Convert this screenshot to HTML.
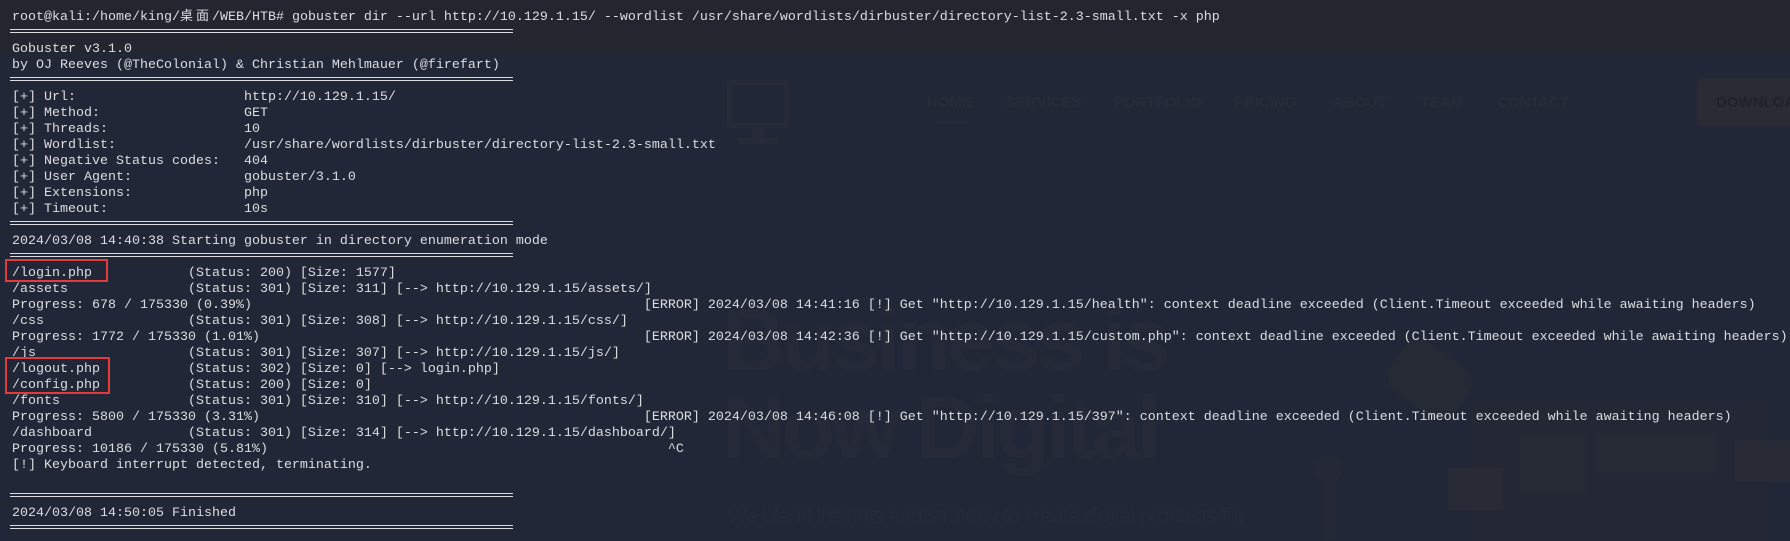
<!DOCTYPE html>
<html><head><meta charset="utf-8"><style>
html,body{margin:0;padding:0}
body{width:1790px;height:535px;overflow:hidden;background:#222738;position:relative;font-family:"Liberation Mono","DejaVu Sans Mono",monospace}
.top{position:absolute;left:0;top:0;width:1790px;height:53px;background:#24262f}
.bg{position:absolute;font-family:"Liberation Sans",sans-serif;font-weight:bold}
.nav{position:absolute;top:94px;font-size:15px;color:#282c38;font-family:"Liberation Sans",sans-serif;font-weight:bold}
pre{position:absolute;left:12px;top:7px;margin:0;font-size:13.33px;line-height:16px;color:#dcdde0;font-family:"Liberation Mono",monospace}
.cj{display:inline-block;width:32px;font-family:"Noto Sans CJK SC",sans-serif;font-size:13px;letter-spacing:3px}
.sep{position:absolute;left:10px;width:503px;height:2px;border-top:1px solid #dcdde0;border-bottom:1px solid #dcdde0}
.box{position:absolute;border:2px solid #e33b3b;box-sizing:border-box}
.r{position:absolute;background:#252935}
</style></head><body>
<div class="top"></div>
<div class="r" style="left:727px;top:80px;width:62px;height:48px;border:5px solid #272b37;background:transparent;box-sizing:border-box;border-radius:3px"></div>
<div class="r" style="left:752px;top:128px;width:12px;height:10px;background:#272b37"></div>
<div class="r" style="left:738px;top:138px;width:40px;height:6px;background:#272b37"></div>
<div class="nav" style="left:927px">HOME</div>
<div class="nav" style="left:1006px">SERVICES</div>
<div class="nav" style="left:1114px">PORTFOLIO</div>
<div class="nav" style="left:1234px">PRICING</div>
<div class="nav" style="left:1333px">ABOUT</div>
<div class="nav" style="left:1421px">TEAM</div>
<div class="nav" style="left:1497px">CONTACT</div>
<div class="r" style="left:937px;top:121px;width:30px;height:3px;background:#272a35"></div>
<div class="r" style="left:1697px;top:78px;width:100px;height:48px;background:#2a2c35;border-radius:5px"></div>
<div class="nav" style="left:1716px;top:94px;color:#1f222d">DOWNLOAD</div>
<div class="bg" style="left:722px;top:296px;font-size:88px;color:#262a38;letter-spacing:-4px;line-height:88px">Business is<br>Now Digital</div>
<div class="bg" style="left:727px;top:503px;font-size:22px;color:#262a38;font-weight:normal;letter-spacing:-1px">We blend insights and strategy to create digital products for</div>
<div class="r" style="left:1472px;top:401px;width:295px;height:140px;background:#242834"></div>
<div class="r" style="left:1520px;top:433px;width:66px;height:62px;background:#262a34"></div>
<div class="r" style="left:1595px;top:433px;width:122px;height:40px;background:#262a34"></div>
<div class="r" style="left:1448px;top:468px;width:55px;height:42px;background:#282b35"></div>
<div class="r" style="left:1734px;top:440px;width:56px;height:42px;background:#282b35"></div>
<div class="r" style="left:1390px;top:350px;width:80px;height:60px;background:#262a35;border-radius:20px;transform:rotate(35deg)"></div>
<div class="r" style="left:1315px;top:455px;width:28px;height:28px;background:#252935;border-radius:50%"></div>
<div class="r" style="left:1322px;top:480px;width:14px;height:60px;background:#252935"></div>
<pre>root@kali:/home/king/<span class="cj">桌面</span>/WEB/HTB# gobuster dir --url http://10.129.1.15/ --wordlist /usr/share/wordlists/dirbuster/directory-list-2.3-small.txt -x php

Gobuster v3.1.0
by OJ Reeves (@TheColonial) &amp; Christian Mehlmauer (@firefart)

[+] Url:                     http://10.129.1.15/
[+] Method:                  GET
[+] Threads:                 10
[+] Wordlist:                /usr/share/wordlists/dirbuster/directory-list-2.3-small.txt
[+] Negative Status codes:   404
[+] User Agent:              gobuster/3.1.0
[+] Extensions:              php
[+] Timeout:                 10s

2024/03/08 14:40:38 Starting gobuster in directory enumeration mode

/login.php            (Status: 200) [Size: 1577]
/assets               (Status: 301) [Size: 311] [--> http://10.129.1.15/assets/]
Progress: 678 / 175330 (0.39%)                                                 [ERROR] 2024/03/08 14:41:16 [!] Get "http://10.129.1.15/health": context deadline exceeded (Client.Timeout exceeded while awaiting headers)
/css                  (Status: 301) [Size: 308] [--> http://10.129.1.15/css/]
Progress: 1772 / 175330 (1.01%)                                                [ERROR] 2024/03/08 14:42:36 [!] Get "http://10.129.1.15/custom.php": context deadline exceeded (Client.Timeout exceeded while awaiting headers)
/js                   (Status: 301) [Size: 307] [--> http://10.129.1.15/js/]
/logout.php           (Status: 302) [Size: 0] [--> login.php]
/config.php           (Status: 200) [Size: 0]
/fonts                (Status: 301) [Size: 310] [--> http://10.129.1.15/fonts/]
Progress: 5800 / 175330 (3.31%)                                                [ERROR] 2024/03/08 14:46:08 [!] Get "http://10.129.1.15/397": context deadline exceeded (Client.Timeout exceeded while awaiting headers)
/dashboard            (Status: 301) [Size: 314] [--> http://10.129.1.15/dashboard/]
Progress: 10186 / 175330 (5.81%)                                                  ^C
[!] Keyboard interrupt detected, terminating.


2024/03/08 14:50:05 Finished
</pre>
<div class="sep" style="top:29px"></div>
<div class="sep" style="top:77px"></div>
<div class="sep" style="top:221px"></div>
<div class="sep" style="top:253px"></div>
<div class="sep" style="top:493px"></div>
<div class="sep" style="top:525px"></div>
<div class="box" style="left:5px;top:259px;width:103px;height:23px"></div>
<div class="box" style="left:5px;top:357px;width:105px;height:37px"></div>
</body></html>
